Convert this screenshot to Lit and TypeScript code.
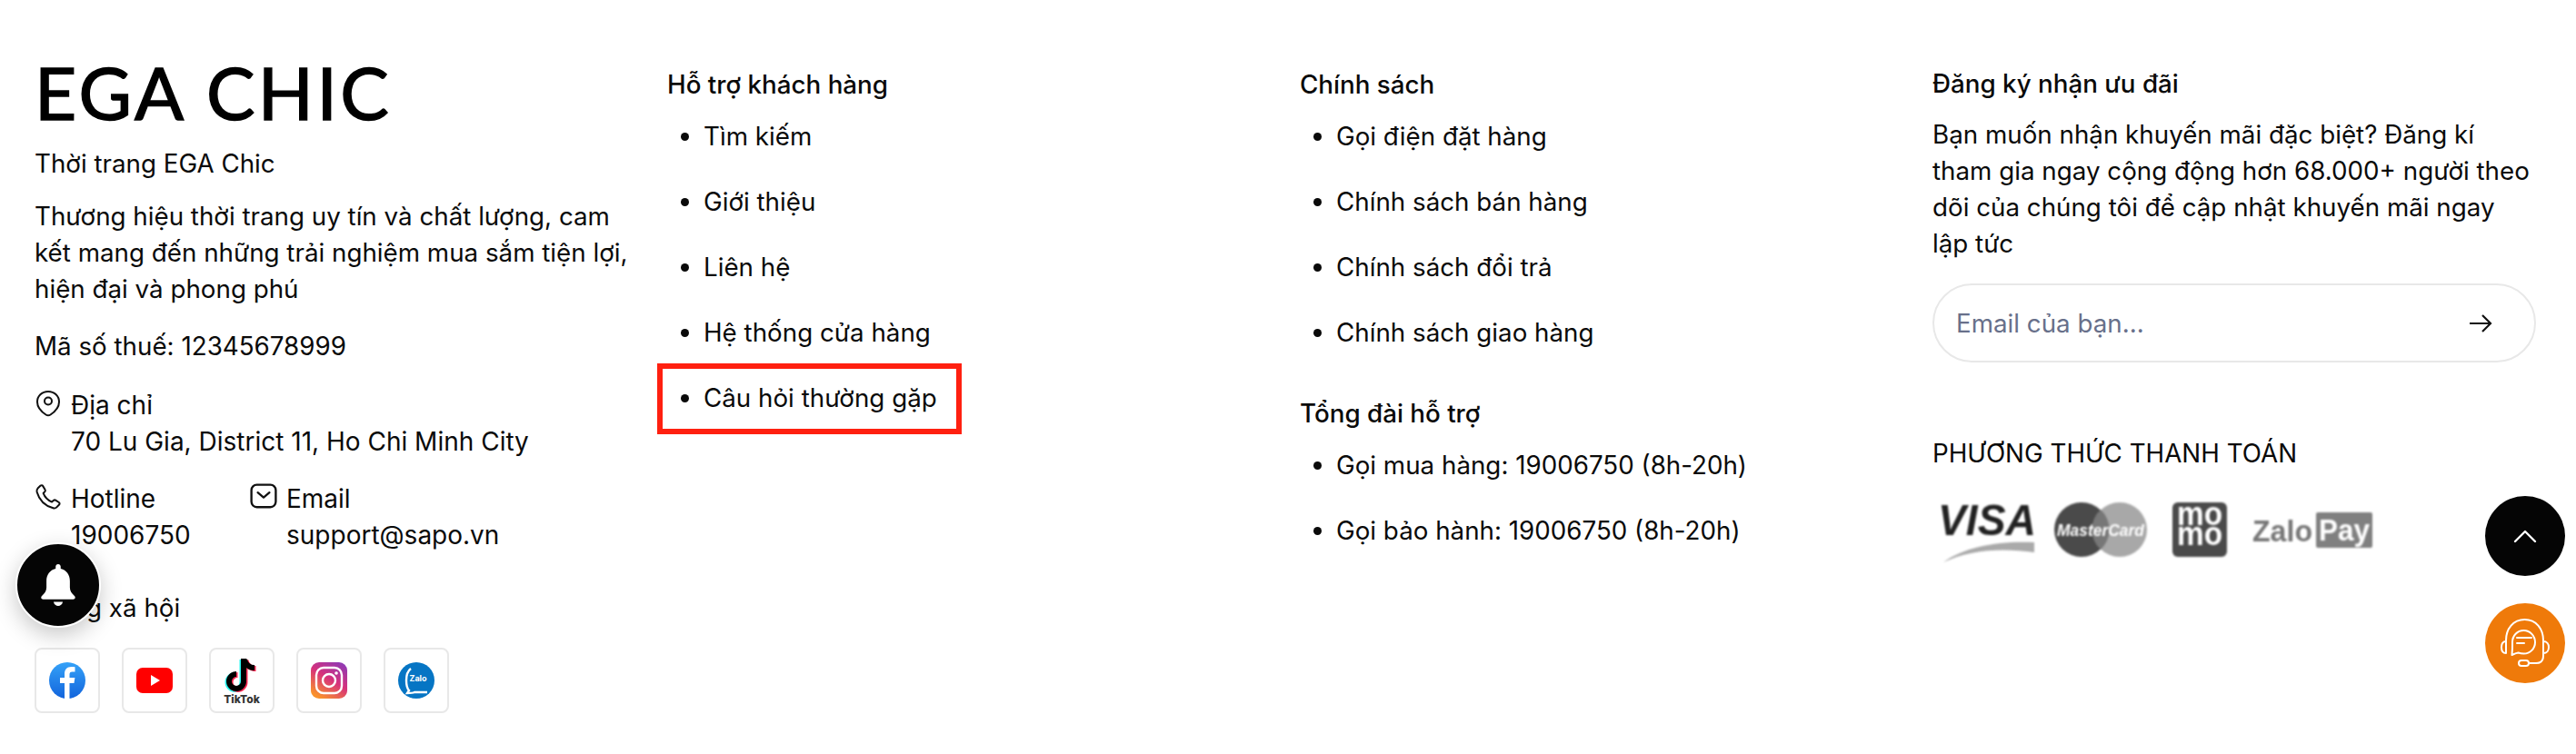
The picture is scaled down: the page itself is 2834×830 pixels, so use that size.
import { LitElement, html, css, svg } from "lit";
import { customElement } from "lit/decorators.js";

const pin = svg`<path d="M15 2C8 2 3 7 3 13.500c0 6 5 11 9.500 14 1.500 1 3.500 1 5 0 4.500-3 9.500-8 9.500-14C27 7 22 2 15 2Z" fill="none" stroke="#111" stroke-width="2"/><circle cx="15" cy="12.500" r="4" fill="none" stroke="#111" stroke-width="2"/>`;
const phone = svg`<path d="M3.300 5.200 6.200 2.400c.7-.6 1.800-.5 2.300.3l2.300 3.800c.4.600.3 1.400-.2 2L9 10.200c1.500 4 4.600 7.300 8.800 9l1.800-1.600c.6-.5 1.400-.6 2-.2l3.400 2.200c.8.500 1 1.600.3 2.300l-2.600 2.700c-1 1-2.300 1.300-3.600.9C10.500 23 4.600 16.500 2.400 8.800 2 7.500 2.400 6.200 3.300 5.200Z" fill="none" stroke="#111" stroke-width="1.900" stroke-linejoin="round"/>`;
const mail = svg`<rect x="1.500" y="1.500" width="25" height="23" rx="5.500" fill="none" stroke="#111" stroke-width="2.200"/><path d="M8 9.500l6 5 6-5" fill="none" stroke="#111" stroke-width="2.200" stroke-linecap="round" stroke-linejoin="round"/>`;

@customElement("app-root")
export class AppRoot extends LitElement {
  static styles = css`
    :host { display: block; width: 2834px; height: 830px; position: relative; overflow: hidden; background: #fff; color: #0a0a0a; font-family: Inter, "Noto Sans", sans-serif; font-size: 27.76px; line-height: 40px; }
    * { box-sizing: border-box; }
    .footer { display: grid; grid-template-columns: repeat(4, 696px); padding: 73px 0 0 38px; }
    .col { width: 666px; display: flex; flex-direction: column; }
    .logo { height: 62px; font-family: Lato, sans-serif; font-size: 80px; line-height: 56px; letter-spacing: 3.500px; -webkit-text-stroke: 1.500px #000; color: #000; white-space: nowrap; margin-bottom: 25px; }
    .desc { margin: 18px 0 23px; }
    .contact { display: flex; gap: 10px; font-size: 28px; }
    .contact svg { flex: none; width: 30px; height: 30px; margin-top: 3px; }
    .addr { margin: 25px 0 23px; }
    .duo { display: flex; }
    .duo .contact:first-child { width: 237px; }
    .subhead { margin-top: 40px; }
    .social { display: flex; gap: 24px; margin-top: 24px; }
    .social div { width: 72px; height: 72px; border: 2px solid #e8e8e8; border-radius: 8px; display: flex; align-items: center; justify-content: center; }
    h3 { margin: 0; font-size: 27.76px; line-height: 40px; font-weight: 500; }
    ul { margin: 17px 0 0; padding: 0 0 0 40px; list-style: disc; }
    li { margin-bottom: 32px; position: relative; }
    li:last-child { margin-bottom: 0; }
    .mark::after { content: ""; box-sizing: border-box; position: absolute; left: -51px; top: -18px; width: 335px; height: 78px; border: 6px solid #ff2010; }
    .second { margin-top: 49px; }
    .second + ul { margin-top: 17px; }
    .sub-col { margin-top: -1px; }
    .sub-col p { margin: 16px 0 24px; width: 658px; }
    .input { height: 87px; width: 664px; border: 2px solid #e8e8e8; border-radius: 44px; display: flex; align-items: center; justify-content: space-between; padding: 0 46px 0 24px; color: #68708a; }
    .pay-head { margin-top: 80px; font-weight: 400; }
    .pay { display: flex; align-items: flex-start; margin: 34px 0 0 6px; height: 70px; filter: grayscale(1) blur(1.200px); }
    .visa { width: 110px; }
    .mc { margin-left: 18px; }
    .momo { margin-left: 26px; }
    .zp { margin: 11px 0 0 28px; }
    .fab { position: absolute; border-radius: 50%; display: flex; align-items: center; justify-content: center; }
    .bell { left: 17px; top: 597px; width: 94px; height: 94px; background: #050505; border: 2px solid #fff; box-shadow: 0 8px 24px rgba(0,0,0,.22); }
    .top { left: 2734px; top: 546px; width: 88px; height: 88px; background: #050505; }
    .help { left: 2734px; top: 664px; width: 88px; height: 88px; background: #ef7a0a; }
  `;

  private list(items: string[], mark = -1) {
    return html`<ul>${items.map((t, i) => html`<li class=${i === mark ? "mark" : ""}>${t}</li>`)}</ul>`;
  }

  render() {
    return html`
      <div class="footer">
        <div class="col">
          <div class="logo">EGA CHIC</div>
          <div>Thời trang EGA Chic</div>
          <div class="desc">Thương hiệu thời trang uy tín và chất lượng, cam kết mang đến những trải nghiệm mua sắm tiện lợi, hiện đại và phong phú</div>
          <div>Mã số thuế: 12345678999</div>
          <div class="contact addr"><svg viewBox="0 0 30 30">${pin}</svg><div>Địa chỉ<br />70 Lu Gia, District 11, Ho Chi Minh City</div></div>
          <div class="duo">
            <div class="contact"><svg viewBox="0 0 28 28">${phone}</svg><div>Hotline<br />19006750</div></div>
            <div class="contact"><svg viewBox="0 0 28 28">${mail}</svg><div>Email<br />support@sapo.vn</div></div>
          </div>
          <div class="subhead">Mạng xã hội</div>
          <div class="social">
            <div><svg width="42" height="42" viewBox="0 0 42 42"><defs><linearGradient id="fb" x1="0" y1="0" x2="0" y2="1"><stop offset="0" stop-color="#35a2f8"/><stop offset="1" stop-color="#1264dc"/></linearGradient></defs><circle cx="21" cy="21" r="20" fill="url(#fb)"/><path d="M23.500 41V24h5l.9-6h-5.900v-3.500c0-1.800.8-3 3-3h3V6.300C28.500 6.100 27 6 25.500 6c-4.500 0-7.500 2.700-7.500 7.800V18h-5v6h5v17Z" fill="#fff"/></svg></div>
            <div><svg width="40" height="30" viewBox="0 0 40 30"><rect width="40" height="28" y="1" rx="7" fill="#f00"/><path d="M16 9l10 6-10 6Z" fill="#fff"/></svg></div>
            <div><svg width="44" height="52" viewBox="0 0 44 52"><g fill="none" stroke-width="6"><path d="M24 2v25a8 8 0 1 1-8-8" stroke="#25f4ee" transform="translate(-1.500 1)"/><path d="M24 2v25a8 8 0 1 1-8-8M25 3c1 5 5 9 11 9" stroke="#fe2c55" transform="translate(1.500 1)"/><path d="M24 2v25a8 8 0 1 1-8-8M25 3c1 5 5 9 11 9" stroke="#000"/></g><text x="22" y="51" text-anchor="middle" font-family="Inter, sans-serif" font-size="12" font-weight="800" fill="#333">TikTok</text></svg></div>
            <div><svg width="40" height="40" viewBox="0 0 40 40"><defs><linearGradient id="ig" x1="0.900" y1="0" x2="0.300" y2="1"><stop offset="0" stop-color="#8a3ab9"/><stop offset=".5" stop-color="#d6317b"/><stop offset="1" stop-color="#f9912c"/></linearGradient></defs><rect width="40" height="40" rx="9" fill="url(#ig)"/><rect x="6" y="6" width="28" height="28" rx="8" fill="none" stroke="#fff" stroke-width="2.400"/><circle cx="20" cy="20" r="7" fill="none" stroke="#fff" stroke-width="2.400"/><circle cx="28" cy="12" r="1.800" fill="#fff"/></svg></div>
            <div><svg width="42" height="42" viewBox="0 0 42 42"><circle cx="21" cy="21" r="20" fill="#0675c4"/><path d="M15 8c-4 3-5 8-5 13s1 9 3 11l-2 3c4 0 6 0 8-1h14" fill="none" stroke="#fff" stroke-width="2.400"/><text x="23" y="22" text-anchor="middle" font-family="Inter, sans-serif" font-size="9" font-weight="700" fill="#fff">Zalo</text></svg></div>
          </div>
        </div>
        <div class="col">
          <h3>Hỗ trợ khách hàng</h3>
          ${this.list(["Tìm kiếm", "Giới thiệu", "Liên hệ", "Hệ thống cửa hàng", "Câu hỏi thường gặp"], 4)}
        </div>
        <div class="col">
          <h3>Chính sách</h3>
          ${this.list(["Gọi điện đặt hàng", "Chính sách bán hàng", "Chính sách đổi trả", "Chính sách giao hàng"])}
          <h3 class="second">Tổng đài hỗ trợ</h3>
          ${this.list(["Gọi mua hàng: 19006750 (8h-20h)", "Gọi bảo hành: 19006750 (8h-20h)"])}
        </div>
        <div class="col sub-col">
          <h3>Đăng ký nhận ưu đãi</h3>
          <p>Bạn muốn nhận khuyến mãi đặc biệt? Đăng kí tham gia ngay cộng động hơn 68.000+ người theo dõi của chúng tôi để cập nhật khuyến mãi ngay lập tức</p>
          <div class="input"><span>Email của bạn...</span><svg width="26" height="24" viewBox="0 0 26 24"><path d="M1 12h23M15 3l9 9-9 9" fill="none" stroke="#111" stroke-width="2.200"/></svg></div>
          <h3 class="pay-head">PHƯƠNG THỨC THANH TOÁN</h3>
          <div class="pay">
            <svg class="visa" width="110" height="70" viewBox="0 0 110 70"><text x="0" y="36" font-family="Liberation Sans, sans-serif" font-size="48" font-weight="700" font-style="italic" fill="#222" textLength="108" lengthAdjust="spacingAndGlyphs">VISA</text><path d="M6 66C30 48 70 42 106 44v11C70 50 36 52 6 66Z" fill="#aaa"/></svg>
            <svg class="mc" width="104" height="60" viewBox="0 0 104 60"><circle cx="30" cy="30" r="30" fill="#4a4a4a"/><circle cx="72" cy="30" r="30" fill="#a8a8a8"/><path d="M51 8a30 30 0 0 1 0 44 30 30 0 0 1 0-44Z" fill="#777"/><text x="51" y="37" text-anchor="middle" font-family="Liberation Sans, sans-serif" font-size="19" font-weight="700" font-style="italic" fill="#fff" textLength="96" lengthAdjust="spacingAndGlyphs">MasterCard</text></svg>
            <svg class="momo" width="60" height="60" viewBox="0 0 60 60"><rect width="60" height="60" rx="6" fill="#4a4a4a"/><text x="30" y="25" text-anchor="middle" font-family="Liberation Sans, sans-serif" font-size="36" font-weight="700" fill="#fff" textLength="50" lengthAdjust="spacingAndGlyphs">mo</text><text x="30" y="47" text-anchor="middle" font-family="Liberation Sans, sans-serif" font-size="36" font-weight="700" fill="#fff" textLength="50" lengthAdjust="spacingAndGlyphs">mo</text></svg>
            <svg class="zp" width="132" height="42" viewBox="0 0 132 42"><text x="0" y="32" font-family="Liberation Sans, sans-serif" font-size="34" font-weight="700" fill="#777" textLength="66" lengthAdjust="spacingAndGlyphs">Zalo</text><rect x="70" y="0" width="62" height="39" rx="2" fill="#808080"/><text x="73" y="31" font-family="Liberation Sans, sans-serif" font-size="34" font-weight="700" fill="#fff" textLength="56" lengthAdjust="spacingAndGlyphs">Pay</text></svg>
          </div>
        </div>
      </div>
      <div class="fab bell"><svg width="40" height="46" viewBox="0 0 42 50"><path d="M21 0c-1.700 0-3 1.300-3 3v2.400C11 7 7 13 7 20v8c0 4-2 7-5.500 10-1.500 1.500-1 4 1.500 4h36c2.500 0 3-2.500 1.500-4C37 35 35 32 35 28v-8c0-7-4-13-11-14.600V3c0-1.700-1.300-3-3-3Z" fill="#fff"/><path d="M15.500 45h11c-.5 3-3 5-5.500 5s-5-2-5.500-5Z" fill="#fff"/></svg></div>
      <div class="fab top"><svg width="26" height="16" viewBox="0 0 26 16"><path d="M2 14 13 3l11 11" fill="none" stroke="#fff" stroke-width="2.400" stroke-linecap="round" stroke-linejoin="round"/></svg></div>
      <div class="fab help"><svg width="54" height="54" viewBox="0 0 54 54" fill="none" stroke="#fff" stroke-width="2" stroke-linecap="round" stroke-linejoin="round"><path d="M6 26v-2C6 11 14 1 26.500 1S47 11 47 24v2"/><path d="M6 25v13c-4 0-5-3-5-6.500S2 25 6 25ZM47 25v13c4 0 6-3 6-6.500S51 25 47 25Z"/><path d="M25.500 13C18.500 13 13 18.500 13 26c0 3 .3 5-.5 14 2-1 4-2 7-2.500 2 .7 4 1 6 1 7 0 12.500-5.500 12.500-12.500S32.500 13 25.500 13Z"/><path d="M18 21h16M18 27h8"/><path d="M47 38v3c0 5-3 8-8 8h-8"/><rect x="20" y="46" width="11" height="6" rx="3"/></svg></div>
    `;
  }
}
